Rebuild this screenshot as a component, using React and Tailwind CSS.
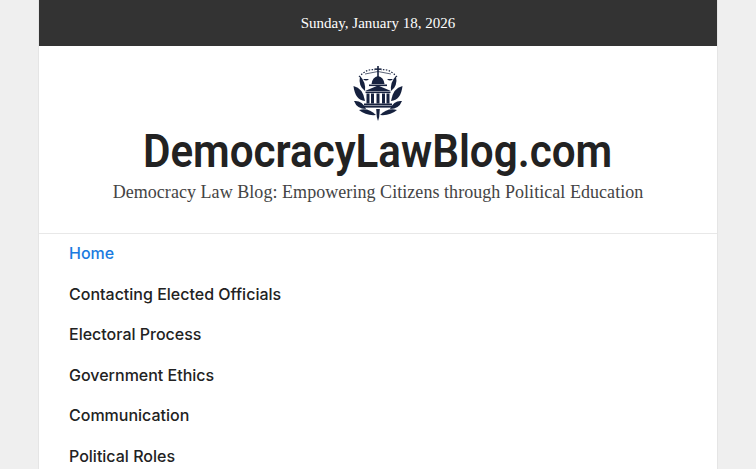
const items = ["Contacting Elected Officials", "Electoral Process", "Government Ethics", "Communication", "Political Roles"];

function Logo() {
  const c = "#16213e";
  return (
    <svg width="50" height="56" viewBox="0 0 50 56" className="block">
      <g fill={c}>
        <rect x="24.2" y="1" width="1.6" height="11" />
        <rect x="21.5" y="3.4" width="7" height="1.5" />
        <path d="M18.5 19 Q19.5 12 25 11 Q30.5 12 31.5 19 Z" />
        <rect x="16" y="19.5" width="18" height="1.6" />
        <path d="M12 26 L25 20.5 L38 26 Z" />
        <rect x="12.5" y="26.5" width="25" height="1.6" />
        <rect x="13.5" y="28.5" width="3" height="10" />
        <rect x="18" y="28.5" width="3" height="10" />
        <rect x="23.5" y="28.5" width="3" height="10" />
        <rect x="29" y="28.5" width="3" height="10" />
        <rect x="33.5" y="28.5" width="3" height="10" />
        <rect x="11" y="38.5" width="28" height="2" />
        <rect x="9" y="41" width="32" height="1.6" />
        <path d="M0.5 21 Q10 23 12 36 Q2 35 0.5 21 Z" />
        <path d="M49.5 21 Q40 23 38 36 Q48 35 49.5 21 Z" />
        <path d="M7 11 Q13 17 12 26 Q5 21 7 11 Z" />
        <path d="M43 11 Q37 17 38 26 Q45 21 43 11 Z" />
        <path d="M1 36 Q9 35 13 44 Q4 44 1 36 Z" />
        <path d="M49 36 Q41 35 37 44 Q46 44 49 36 Z" />
        <path d="M6 45 Q15 42 23 50 Q13 51 6 45 Z" />
        <path d="M44 45 Q35 42 27 50 Q37 51 44 45 Z" />
        <path d="M23.2 44 H26.8 L26.2 52 L25 56 L23.8 52 Z" />
      </g>
      <path d="M6 12 Q14 3 22 5 M44 12 Q36 3 28 5" fill="none" stroke={c} strokeWidth="1.1" strokeDasharray="1.5 1.5" />
      <path d="M12 9 L25 6.5 L38 9" fill="none" stroke={c} strokeWidth="0.7" />
      <path d="M10 14 Q13 17 16 14 Z M34 14 Q37 17 40 14 Z" fill={c} />
    </svg>
  );
}

export default function App() {
  return (
    <div className="h-[469px] overflow-hidden bg-[#efefef]">
      <div className="mx-auto w-[680px] border-x border-[#e5e5e5] bg-white">
        <div className="flex h-[46px] items-center justify-center bg-[#333333] font-['Liberation_Serif',serif] text-[15px] text-white">
          Sunday, January 18, 2026
        </div>
        <div className="flex h-[188px] flex-col items-center border-b border-[#e8e8e8] pt-[19px]">
          <Logo />
          <div className="origin-center scale-x-[0.897] whitespace-nowrap font-['Roboto',sans-serif] text-[47px] leading-[60px] font-semibold text-[#222222]">
            DemocracyLawBlog.com
          </div>
          <div className="mt-[-1px] font-['Liberation_Serif',serif] text-[18px] leading-6 tracking-[0.05px] text-[#444444]">
            Democracy Law Blog: Empowering Citizens through Political Education
          </div>
        </div>
        <nav className="-mt-[1px] flex flex-col pl-[30px] font-['Inter',sans-serif] text-[16px] font-medium text-[#222222]">
          <a className="flex h-[40.5px] items-center text-[#1a7be0]">Home</a>
          {items.map((t) => (
            <a key={t} className="flex h-[40.5px] items-center">{t}</a>
          ))}
        </nav>
      </div>
    </div>
  );
}
